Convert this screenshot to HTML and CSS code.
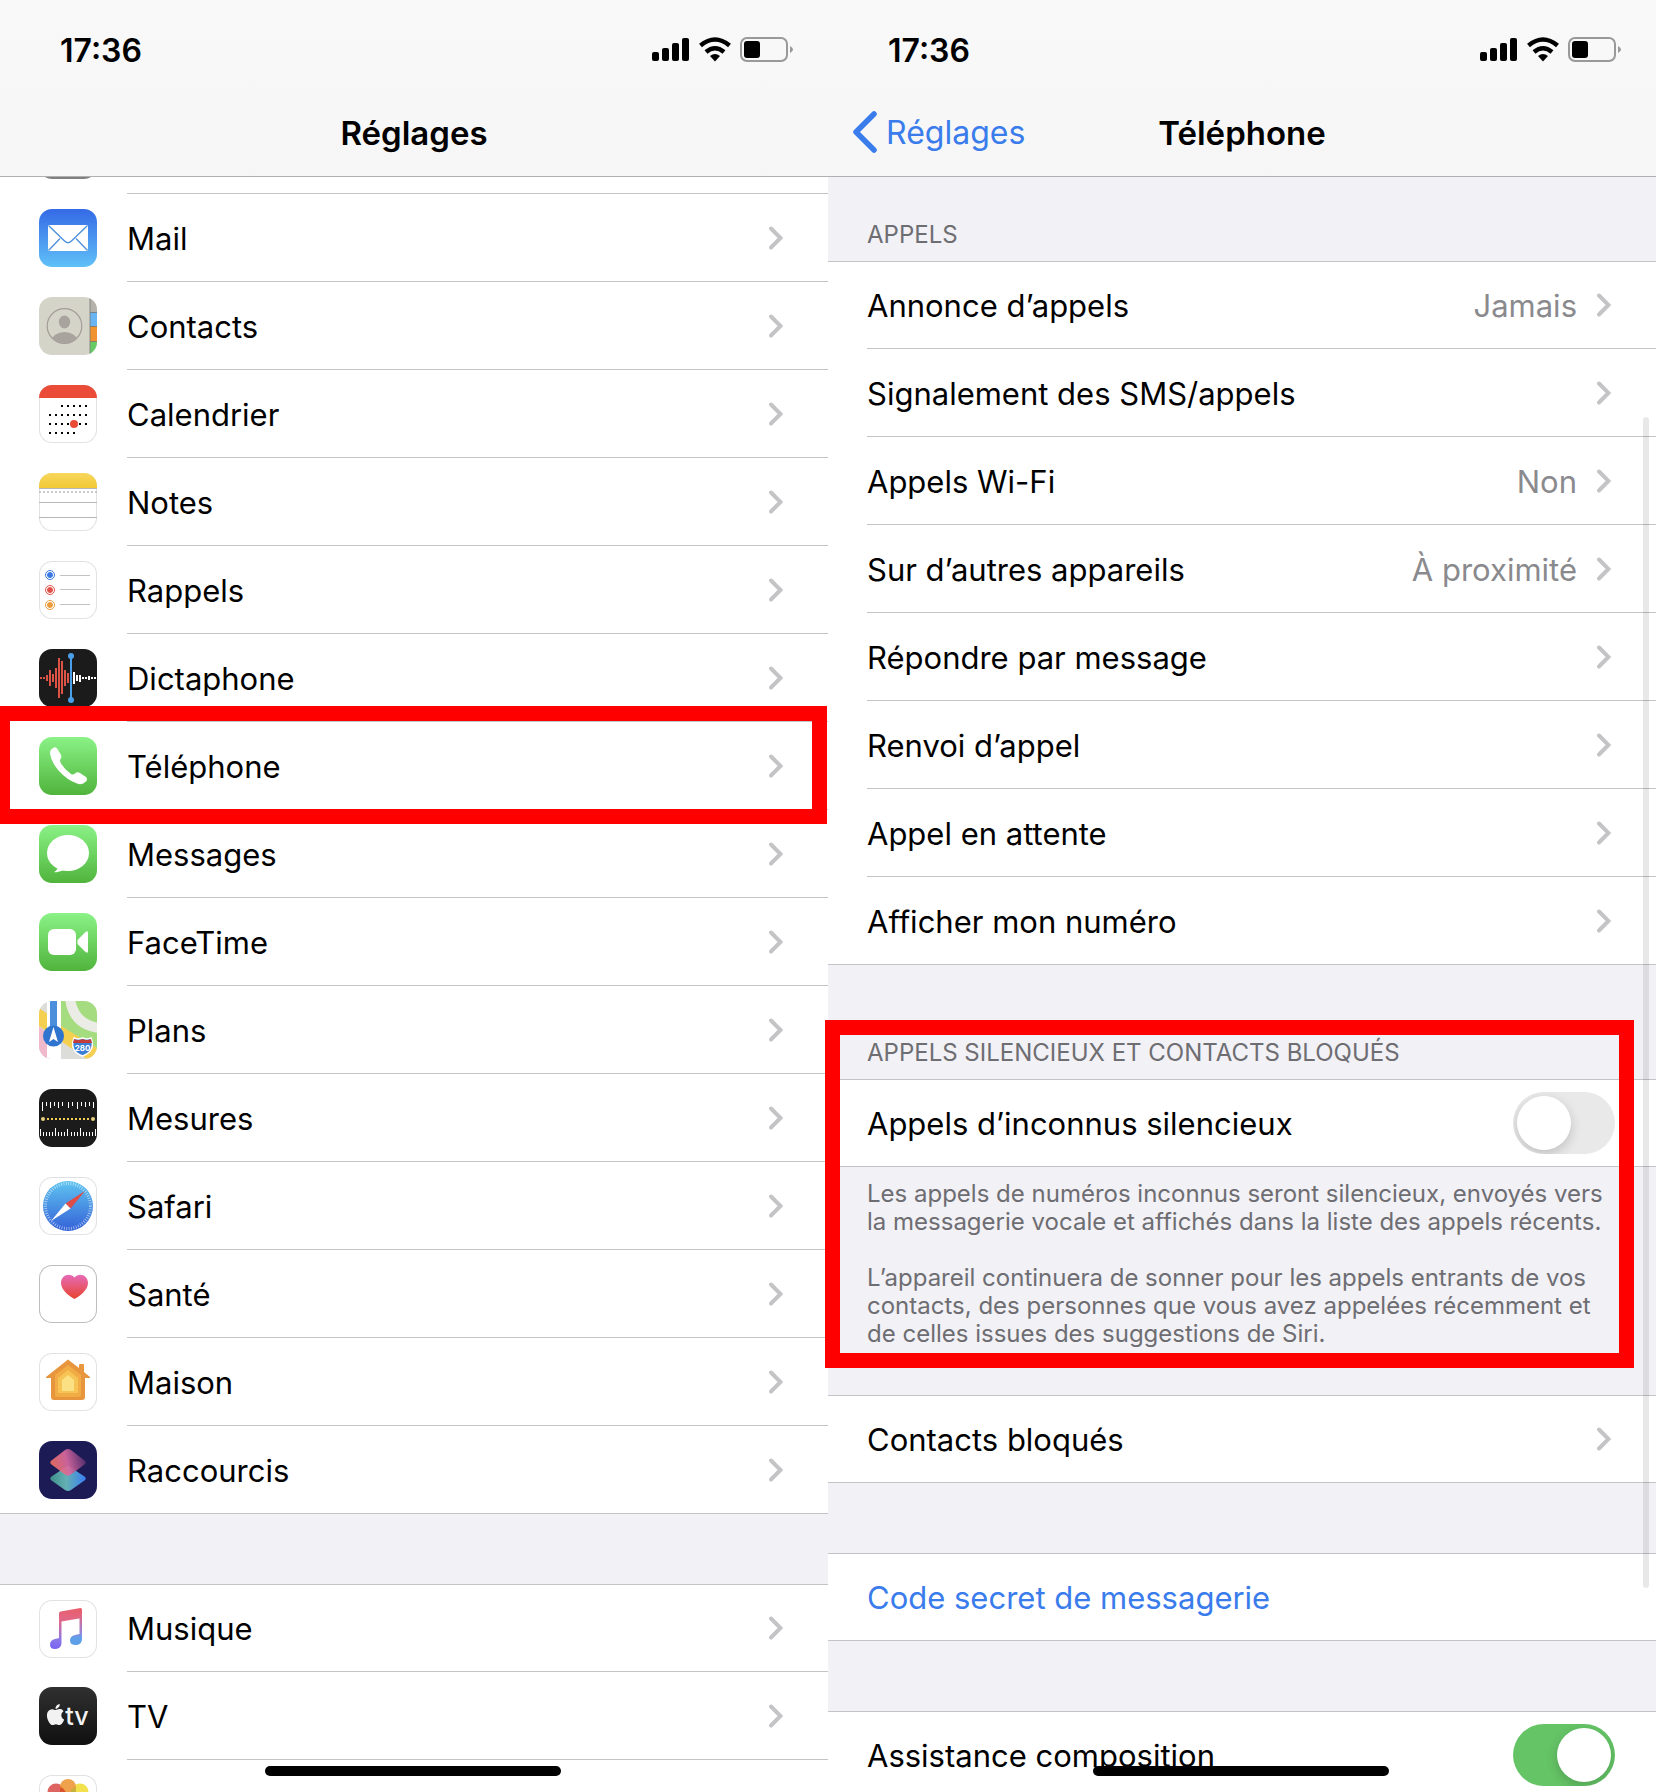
FILE: index.html
```html
<!DOCTYPE html>
<html lang="fr">
<head>
<meta charset="utf-8">
<meta name="viewport" content="width=device-width">
<title>Réglages – Téléphone</title>
<link rel="stylesheet" href="styles.css">
</head>
<body>
<svg class="defs" aria-hidden="true">
  <defs>
    <linearGradient id="g-mail" x2="0" y2="1"><stop offset="0" stop-color="#3569e6"/><stop offset="1" stop-color="#5fc1f8"/></linearGradient>
    <linearGradient id="g-green" x2="0" y2="1"><stop offset="0" stop-color="#8af286"/><stop offset="1" stop-color="#50b43c"/></linearGradient>
    <linearGradient id="g-notes" x2="0" y2="1"><stop offset="0" stop-color="#f7d75c"/><stop offset="1" stop-color="#f2c935"/></linearGradient>
    <linearGradient id="g-safari" x2="0" y2="1"><stop offset="0" stop-color="#5fc4f0"/><stop offset="1" stop-color="#3461d8"/></linearGradient>
    <linearGradient id="g-heart" x2="0" y2="1"><stop offset="0" stop-color="#e66bb8"/><stop offset="1" stop-color="#e8442e"/></linearGradient>
    <linearGradient id="g-top" x1="0" y1=".7" x2="1" y2=".5"><stop offset="0" stop-color="#f07058"/><stop offset=".5" stop-color="#d868a0"/><stop offset="1" stop-color="#5a3070"/></linearGradient>
    <linearGradient id="g-bottom" x1="0" y1=".4" x2="1" y2=".4"><stop offset="0" stop-color="#3f8f8a"/><stop offset=".45" stop-color="#63b0b4"/><stop offset="1" stop-color="#3a7ff2"/></linearGradient>
    <linearGradient id="g-music" x1=".6" y1="0" x2=".5" y2="1"><stop offset="0" stop-color="#e85f6c"/><stop offset=".35" stop-color="#e0688c"/><stop offset=".8" stop-color="#8b78ea"/><stop offset="1" stop-color="#7a66f0"/></linearGradient>
    <linearGradient id="g-music2" gradientUnits="userSpaceOnUse" x1="0" y1="14" x2="0" y2="44"><stop offset="0" stop-color="#e4627a"/><stop offset=".6" stop-color="#9a83d8"/><stop offset=".8" stop-color="#5f9fe8"/></linearGradient>
    <linearGradient id="g-tv" x2="0" y2="1"><stop offset="0" stop-color="#303030"/><stop offset="1" stop-color="#101010"/></linearGradient>
    <symbol id="chevron" viewBox="0 0 14 24"><path d="M2 2.500 11.500 12 2 21.500" fill="none" stroke="#c4c4c6" stroke-width="4" stroke-linecap="round" stroke-linejoin="miter"/></symbol>
    <symbol id="status" viewBox="0 0 142 26">
      <rect x="0" y="15" width="7" height="9" rx="2"/><rect x="10" y="11" width="7" height="13" rx="2"/><rect x="20" y="6" width="7" height="18" rx="2"/><rect x="30" y="1" width="7" height="23" rx="2"/>
      <g fill="none" stroke="#000" stroke-width="4.500"><path d="M48.500 8.500Q63 -3.500 77.500 8.500"/><path d="M54 15Q63 7.500 72 15"/></g>
      <path d="M58 19Q63 15 68 19L63 24.500Z"/>
      <rect x="89" y="1" width="46" height="23" rx="6" fill="none" stroke="#999" stroke-width="2"/>
      <rect x="92" y="4" width="16" height="17" rx="3"/>
      <path d="M138 9Q144 12.500 138 16Z" fill="#999"/>
    </symbol>
  </defs>
</svg>

<main class="screens">
  <section class="screen">
    <header class="bar">
      <div class="status"><span>17:36</span><svg class="status-icons" role="img" aria-label="Réseau, Wi-Fi, batterie"><use href="#status"/></svg></div>
      <nav class="nav"><h1>Réglages</h1></nav>
    </header>
    <div class="group group-first">
      <div class="row row-cut"><svg class="icon" viewBox="0 0 58 58"><rect width="58" height="58" fill="#808080"/></svg><span class="cell"></span></div>

      <a class="row" href="#mail"><svg class="icon" viewBox="0 0 58 58"><rect width="58" height="58" fill="url(#g-mail)"/><rect x="9" y="16" width="40" height="26" rx="1" fill="#fff"/><path d="M9.500 16.500 25 31.500Q29 36 33 31.500L48.500 16.500M9.500 41.500 21 29.500M48.500 41.500 37 29.500" fill="none" stroke="#4b8fdc" stroke-width="1.300"/></svg>
      <span class="cell">Mail<svg class="chevron"><use href="#chevron"/></svg></span></a>

      <a class="row" href="#contacts"><svg class="icon" viewBox="0 0 58 58"><rect width="58" height="58" fill="#d5d4c9"/><clipPath id="c-person"><circle cx="25.500" cy="29" r="17"/></clipPath><circle cx="25.500" cy="29" r="17.300" fill="none" stroke="#a39d98" stroke-width="1.200"/><g fill="#a9a39e" clip-path="url(#c-person)"><ellipse cx="25.500" cy="25" rx="5.700" ry="6.500"/><ellipse cx="25.500" cy="44" rx="13" ry="9"/></g><path fill="#b5b2a9" d="M51 0h7v15h-7z"/><path fill="#69b5f3" d="M51 15h7v14h-7z"/><path fill="#ee9330" d="M51 29h7v16h-7z"/><path fill="#67cb65" d="M51 45h7v13h-7z"/><path d="M51 0v58M51 15.500h7M51 29.500h7M51 44.500h7" stroke="#777" stroke-width=".8"/></svg>
      <span class="cell">Contacts<svg class="chevron"><use href="#chevron"/></svg></span></a>

      <a class="row" href="#calendrier"><svg class="icon outlined" viewBox="0 0 58 58"><path fill="#ea4c38" d="M0 0h58v13H0z"/><g fill="none" stroke="#000" stroke-width="2" stroke-dasharray="2 4"><path d="M22 21h26M10 30h38M10 39h38M10 48h26"/></g><circle cx="35" cy="39" r="4" fill="#e94b36"/></svg>
      <span class="cell">Calendrier<svg class="chevron"><use href="#chevron"/></svg></span></a>

      <a class="row" href="#notes"><svg class="icon outlined" viewBox="0 0 58 58"><path fill="url(#g-notes)" d="M0 0h58v15H0z"/><path d="M0 15.500h58M0 29.500h58M0 44.500h58" stroke="#b8b8b8"/><path d="M0 19h58" stroke="#bbb" stroke-width="1.500" stroke-dasharray="2 2"/></svg>
      <span class="cell">Notes<svg class="chevron"><use href="#chevron"/></svg></span></a>

      <a class="row" href="#rappels"><svg class="icon outlined" viewBox="0 0 58 58"><g fill="#3a78e0" stroke="#3a78e0"><circle cx="11" cy="14" r="4.500" fill="none"/><circle cx="11" cy="14" r="2.500"/></g><g fill="#df5148" stroke="#df5148"><circle cx="11" cy="29" r="4.500" fill="none"/><circle cx="11" cy="29" r="2.500"/></g><g fill="#ea9c3e" stroke="#ea9c3e"><circle cx="11" cy="44" r="4.500" fill="none"/><circle cx="11" cy="44" r="2.500"/></g><path d="M21 14.500h30M21 28.500h30M21 43.500h30" stroke="#c2c2c2"/></svg>
      <span class="cell">Rappels<svg class="chevron"><use href="#chevron"/></svg></span></a>

      <a class="row" href="#dictaphone"><svg class="icon" viewBox="0 0 58 58"><rect width="58" height="58" fill="#1b1b1b"/><path d="M2 28v2M5 28v2M8 26v6M11 21v16M14 25v8M17 19v20M20 9v40M23 12v33M26 21v16M29 24v10" stroke="#dd5346" stroke-width="2"/><path d="M35 23v12M38 26v6M41 26v7M44 28v2M47 28v2M50 27v4M53 28v2M56 28v2" stroke="#fff" stroke-width="2"/><path d="M32 7v44" stroke="#4b9fe8" stroke-width="2"/><circle cx="32" cy="7" r="3" fill="#4b9fe8"/><circle cx="32" cy="51" r="3" fill="#4b9fe8"/></svg>
      <span class="cell">Dictaphone<svg class="chevron"><use href="#chevron"/></svg></span></a>

      <a class="row row-marked" href="#telephone"><svg class="icon" viewBox="0 0 58 58"><rect width="58" height="58" fill="url(#g-green)"/><path fill="#fff" d="M11 16Q11 12 15 10.500Q17 9.500 18.500 12L22 18Q23 20 21.500 22Q20.500 24 22 26.500Q26 33 32 37Q34 38 36 36.500Q38 34.500 41 36L47 40Q49 42 47 44.500Q43 48.500 38 46.500Q28 43 19.500 33.500Q11.500 24 11 16Z"/></svg>
      <span class="cell">Téléphone<svg class="chevron"><use href="#chevron"/></svg></span></a>

      <a class="row" href="#messages"><svg class="icon" viewBox="0 0 58 58"><rect width="58" height="58" fill="url(#g-green)"/><ellipse cx="29" cy="28" rx="21" ry="18" fill="#fff"/><path fill="#fff" d="M19 41Q19 45 15 47Q21 48 26 44Z"/></svg>
      <span class="cell">Messages<svg class="chevron"><use href="#chevron"/></svg></span></a>

      <a class="row" href="#facetime"><svg class="icon" viewBox="0 0 58 58"><rect width="58" height="58" fill="url(#g-green)"/><rect x="9" y="16" width="28" height="26" rx="6" fill="#fff"/><path fill="#fff" d="M38.500 27 46.500 19Q49 17 49 20V38Q49 41 46.500 39L38.500 31Z"/></svg>
      <span class="cell">FaceTime<svg class="chevron"><use href="#chevron"/></svg></span></a>

      <a class="row" href="#plans"><svg class="icon" viewBox="0 0 58 58"><rect width="58" height="58" fill="#dcdcd8"/><path fill="#f5cf50" d="M0 7 58 47V58H48L0 25Z"/><path fill="#f0b9cc" d="M0 26 12 34V58H0Z"/><path fill="#a5dc80" d="M22 0h36v47L22 25Z"/><path d="M31 -3Q34 24 61 27" fill="none" stroke="#ecece6" stroke-width="10"/><path fill="#fff" d="M8 0h14v58H8z"/><path fill="#4b8fdc" d="M11 0h7v30h-7z"/><circle cx="14.500" cy="35" r="10.500" fill="#2f74ce"/><path fill="#fff" d="M14.500 26 19 41 14.500 38 10 41Z"/><path d="M35 37Q39 39 43.500 37Q48 39 52 37Q57 50 43.500 55Q30 50 35 37Z" fill="#3a7fd5" stroke="#fff" stroke-width="1.500"/><path fill="#c33c3c" d="M35 38Q39 40 43.500 38Q48 40 52 38L53 42H34Z"/><text x="43.500" y="50" class="shield">280</text></svg>
      <span class="cell">Plans<svg class="chevron"><use href="#chevron"/></svg></span></a>

      <a class="row" href="#mesures"><svg class="icon" viewBox="0 0 58 58"><rect width="58" height="58" fill="#1b1b1b"/><path d="M3.500 13v9M7.500 13v4M11.500 13v6M15.500 13v4M19.500 13v6M23.500 13v4M29.500 13v6M33.500 13v4M38.500 13v7M42.500 13v4M46.500 13v5M50.500 13v4M54.500 13v6M1.500 40v7M4.500 43v4M7.500 43v4M10.500 43v4M13.500 43v4M16.500 39v8M19.500 43v4M22.500 43v4M25.500 43v4M28.500 40v7M32.500 43v4M35.500 43v4M38.500 43v4M41.500 39v8M44.500 43v4M47.500 43v4M50.500 43v4M53.500 43v4M56.500 40v7" stroke="#fff"/><path d="M8 30h44" stroke="#f0cf52" stroke-width="2" stroke-dasharray="2 2"/><circle cx="4" cy="30" r="2" fill="#e6cf7c"/><circle cx="54" cy="30" r="2" fill="#e6cf7c"/></svg>
      <span class="cell">Mesures<svg class="chevron"><use href="#chevron"/></svg></span></a>

      <a class="row" href="#safari"><svg class="icon outlined" viewBox="0 0 58 58"><circle cx="29" cy="29" r="25" fill="url(#g-safari)"/><circle cx="29" cy="29" r="22.500" fill="none" stroke="#fff" stroke-opacity=".6" stroke-width="3" stroke-dasharray=".8 1.600"/><path fill="#df4b45" d="M46 14 26.500 26.500 31.500 31.500Z"/><path fill="#fff" d="M12 44 26.500 26.500 31.500 31.500Z"/></svg>
      <span class="cell">Safari<svg class="chevron"><use href="#chevron"/></svg></span></a>

      <a class="row" href="#sante"><svg class="icon outlined outlined-dark" viewBox="0 0 58 58"><path fill="url(#g-heart)" d="M35.500 34C30 31 22 25 22 18C22 10 31 7 35.500 12.500C40 7 49 10 49 18C49 25 41 31 35.500 34Z"/></svg>
      <span class="cell">Santé<svg class="chevron"><use href="#chevron"/></svg></span></a>

      <a class="row" href="#maison"><svg class="icon outlined" viewBox="0 0 58 58"><path fill="#e8963e" d="M29 6.500 40 15V12Q40 11 41 11H44Q45 11 45 12V19L51 24V25H46V44Q46 47 43 47H15Q12 47 12 44V25H7V24Z"/><path fill="#f2ac45" d="M29 12 42 22V42Q42 44 40 44H18Q16 44 16 42V22Z"/><path fill="#f6c455" d="M29 17 39 25V40H19V25Z"/><path fill="#fbe184" d="M29 22 35 27V38H23V27Z"/></svg>
      <span class="cell">Maison<svg class="chevron"><use href="#chevron"/></svg></span></a>

      <a class="row" href="#raccourcis"><svg class="icon" viewBox="0 0 58 58"><rect width="58" height="58" fill="#1c1b55"/><path fill="url(#g-bottom)" d="M26 26.500Q29 24 32 26.500L45.500 35.500Q48 37.500 45.500 39.500L32 49Q29 51 26 49L12.500 39.500Q10 37.500 12.500 35.500Z"/><path fill="url(#g-top)" fill-opacity=".92" d="M26 9Q29 7 32 9L45.500 19.500Q48 21.500 45.500 23.500L32 33.500Q29 35.500 26 33.500L12.500 23.500Q10 21.500 12.500 19.500Z"/></svg>
      <span class="cell">Raccourcis<svg class="chevron"><use href="#chevron"/></svg></span></a>
    </div>

    <div class="group group-spaced">
      <a class="row" href="#musique"><svg class="icon outlined" viewBox="0 0 58 58"><path fill="url(#g-music)" d="M20 13.500Q20 12 21.500 11.500L41.500 8Q43 8 43 9.500V18L22.500 21.500V43Q22.500 48 17 49Q11 49.500 11 44.500Q11 40 16 39L20 38Z"/><path fill="url(#g-music2)" d="M40.500 14H43V39Q43 44 38 45Q31 45.500 31 40.500Q31 36 36 35L40.500 34Z"/></svg>
      <span class="cell">Musique<svg class="chevron"><use href="#chevron"/></svg></span></a>

      <a class="row" href="#tv"><svg class="icon" viewBox="0 0 58 58"><rect width="58" height="58" fill="url(#g-tv)"/><path transform="translate(6 17) scale(.88)" fill="#f2f2f2" d="M12.152 6.896c-.948 0-2.415-1.078-3.960-1.040-2.040.027-3.910 1.183-4.961 3.014-2.117 3.675-.546 9.103 1.519 12.090 1.013 1.454 2.208 3.090 3.792 3.039 1.520-.065 2.090-.987 3.935-.987 1.831 0 2.350.987 3.960.948 1.637-.026 2.676-1.480 3.676-2.948 1.156-1.688 1.636-3.325 1.662-3.415-.039-.013-3.182-1.221-3.220-4.857-.026-3.040 2.480-4.494 2.597-4.559-1.429-2.090-3.623-2.324-4.390-2.376-2-.156-3.675 1.090-4.610 1.090zM15.530 3.830c.843-1.012 1.400-2.427 1.245-3.830-1.207.052-2.662.805-3.532 1.818-.780.896-1.454 2.338-1.273 3.714 1.338.104 2.715-.688 3.560-1.702"/><text x="38" y="38" class="tv">tv</text></svg>
      <span class="cell">TV<svg class="chevron"><use href="#chevron"/></svg></span></a>

      <a class="row" href="#photos" aria-label="Photos"><svg class="icon outlined" viewBox="0 0 58 58"><circle cx="17" cy="17" r="8.500" fill="#dd6460"/><circle cx="41" cy="17" r="8.500" fill="#f2e04c"/><rect x="21" y="4" width="16" height="24" rx="8" fill="#ee9a3c" fill-opacity=".92"/><path fill="#d9532e" d="M21 12Q26 14 27 18H21Z"/><path fill="#c9b13c" d="M37 12Q32 14 31 18H37Z"/></svg>
      <span class="cell"></span></a>
    </div>
    <div class="home"></div>
  </section>

  <section class="screen">
    <header class="bar">
      <div class="status"><span>17:36</span><svg class="status-icons" role="img" aria-label="Réseau, Wi-Fi, batterie"><use href="#status"/></svg></div>
      <nav class="nav">
        <a class="back" href="#reglages"><svg viewBox="0 0 25 42"><path d="M22 3 4 21 22 39" fill="none" stroke="#3a7cec" stroke-width="5.500" stroke-linecap="round" stroke-linejoin="round"/></svg>Réglages</a>
        <h1>Téléphone</h1>
      </nav>
    </header>

    <section>
      <h2 class="caption caption-first">APPELS</h2>
      <div class="group">
        <a class="row" href="#annonce"><span class="cell">Annonce d’appels<span class="value">Jamais</span><svg class="chevron"><use href="#chevron"/></svg></span></a>
        <a class="row" href="#signalement"><span class="cell">Signalement des SMS/appels<svg class="chevron"><use href="#chevron"/></svg></span></a>
        <a class="row" href="#wifi"><span class="cell">Appels Wi-Fi<span class="value">Non</span><svg class="chevron"><use href="#chevron"/></svg></span></a>
        <a class="row" href="#appareils"><span class="cell">Sur d’autres appareils<span class="value">À proximité</span><svg class="chevron"><use href="#chevron"/></svg></span></a>
        <a class="row" href="#repondre"><span class="cell">Répondre par message<svg class="chevron"><use href="#chevron"/></svg></span></a>
        <a class="row" href="#renvoi"><span class="cell">Renvoi d’appel<svg class="chevron"><use href="#chevron"/></svg></span></a>
        <a class="row" href="#attente"><span class="cell">Appel en attente<svg class="chevron"><use href="#chevron"/></svg></span></a>
        <a class="row" href="#numero"><span class="cell">Afficher mon numéro<svg class="chevron"><use href="#chevron"/></svg></span></a>
      </div>
    </section>

    <section class="marked">
      <h2 class="caption">APPELS SILENCIEUX ET CONTACTS BLOQUÉS</h2>
      <div class="group">
        <label class="row row-switch"><span class="cell">Appels d’inconnus silencieux<input class="switch" type="checkbox"></span></label>
      </div>
      <div class="note">
        <p>Les appels de numéros inconnus seront silencieux, envoyés vers<br>la messagerie vocale et affichés dans la liste des appels récents.</p>
        <p>L’appareil continuera de sonner pour les appels entrants de vos<br>contacts, des personnes que vous avez appelées récemment et<br>de celles issues des suggestions de Siri.</p>
      </div>
    </section>

    <div class="group">
      <a class="row" href="#bloques"><span class="cell">Contacts bloqués<svg class="chevron"><use href="#chevron"/></svg></span></a>
    </div>
    <div class="group group-spaced">
      <button class="row row-action" type="button"><span class="cell">Code secret de messagerie</span></button>
    </div>
    <div class="group group-spaced">
      <label class="row row-switch"><span class="cell">Assistance composition<input class="switch" type="checkbox" checked></span></label>
    </div>
    <div class="scrollbar"></div>
    <div class="home"></div>
  </section>
</main>
</body>
</html>
```
FILE: styles.css
```css
* { box-sizing: border-box; }

body {
  margin: 0;
  background: #f2f1f6;
  color: #000;
  font: 31px/40px Inter, "Liberation Sans", sans-serif;
}

h1, h2, p { margin: 0; font-weight: 400; }
a { color: inherit; text-decoration: none; }
.defs { position: absolute; width: 0; height: 0; }

.screens {
  display: grid;
  grid-template-columns: 1fr 1fr;
  height: 100vh;
  overflow: hidden;
}
.screen { position: relative; min-width: 0; }

/* Status bar and title */
.bar {
  background: linear-gradient(#f9f9fa, #f6f6f6);
  border-bottom: 1px solid #b0b0b2;
  padding-bottom: 12px;
  font-size: 32px;
}
.status {
  display: flex;
  align-items: center;
  justify-content: space-between;
  height: 100px;
  padding: 2px 34px 0 60px;
  font-weight: 600;
}
.status-icons { width: 142px; height: 26px; margin-bottom: 2px; }
.nav {
  display: grid;
  grid-template-columns: 1fr auto 1fr;
  align-items: center;
  height: 64px;
  padding-top: 2px;
}
.nav h1 { grid-column: 2; font-size: 33px; font-weight: 600; }
.back {
  display: flex;
  align-items: center;
  gap: 9px;
  padding-left: 24px;
  color: #3a7cec;
}
.back svg { width: 25px; height: 42px; margin-bottom: 2px; }

/* Lists */
.group {
  background: #fff;
  border-top: 1px solid #c4c4c7;
  border-bottom: 1px solid #c4c4c7;
}
.group-first { border-top: 0; }
.group-spaced { margin-top: 70px; }
.row {
  position: relative;
  display: flex;
  align-items: center;
  gap: 30px;
  width: 100%;
  height: 88px;
  padding-left: 39px;
}
.row:first-child { height: 87px; }
.row:last-child { height: 87px; }
.row:only-child { height: 86px; }
.row.row-cut {
  height: 17px;
  align-items: flex-end;
  overflow: hidden;
}
.row-cut .icon { margin-bottom: 15px; }
.cell {
  display: flex;
  flex: 1;
  align-items: center;
  gap: 20px;
  align-self: stretch;
  padding: 2px 45px 0 0;
  border-bottom: 1px solid #c4c4c7;
}
.row:last-child .cell { border-bottom: 0; }
.icon {
  flex: none;
  width: 58px;
  height: 58px;
  border-radius: 13px;
  overflow: hidden;
}
.outlined { background: #fff; box-shadow: inset 0 0 0 1px #e2e2e4; }
.outlined-dark { box-shadow: inset 0 0 0 1px #bebec0; }
.shield { font: 700 8px Inter, sans-serif; fill: #fff; text-anchor: middle; }
.tv { font: 500 25px Inter, sans-serif; fill: #f2f2f2; text-anchor: middle; }
.chevron { flex: none; width: 14px; height: 24px; margin: 0 0 2px auto; }
.value { margin-left: auto; color: #8a8a8e; }
.value + .chevron { margin-left: 0; }

.row-action {
  border: 0;
  background: none;
  color: #3a7cec;
  font: inherit;
  text-align: left;
  padding: 0 0 0 39px;
}

.caption, .note {
  padding-left: 39px;
  color: #6d6d72;
  font-size: 24px;
  line-height: 28px;
}
.caption { padding-top: 74px; padding-bottom: 12px; }
.caption-first { padding-top: 44px; }
.note { padding-top: 13px; padding-bottom: 47px; }
.note p + p { margin-top: 28px; }

/* Switches */
.row-switch .cell { padding-right: 41px; }
.switch {
  appearance: none;
  display: flex;
  width: 102px;
  height: 62px;
  margin: 0 0 2px auto;
  padding: 4px;
  border-radius: 31px;
  background: #e9e9ea;
  overflow: hidden;
}
.switch::before {
  content: "";
  width: 54px;
  height: 54px;
  border-radius: 50%;
  background: #fff;
  box-shadow: 0 4px 12px rgba(0, 0, 0, .18);
}
.switch:checked { justify-content: flex-end; background: #65c466; }

/* Red frames */
.row-marked::after, .marked::after {
  content: "";
  position: absolute;
  z-index: 1;
  border: 15px solid #fe0000;
  pointer-events: none;
}
.row-marked::after { inset: -16px 1px -14px 0; border-left-width: 10px; }
.marked { position: relative; }
.marked::after { inset: 55px 22px 27px -3px; }

/* Overlays */
.scrollbar {
  position: absolute;
  top: 417px;
  right: 7px;
  width: 6px;
  height: 1171px;
  border-radius: 3px;
  background: rgba(0, 0, 0, .09);
}
.home {
  position: absolute;
  top: calc(100vh - 26px);
  left: 0;
  right: 2px;
  width: 296px;
  height: 10px;
  margin: 0 auto;
  border-radius: 5px;
  background: #000;
}
```
